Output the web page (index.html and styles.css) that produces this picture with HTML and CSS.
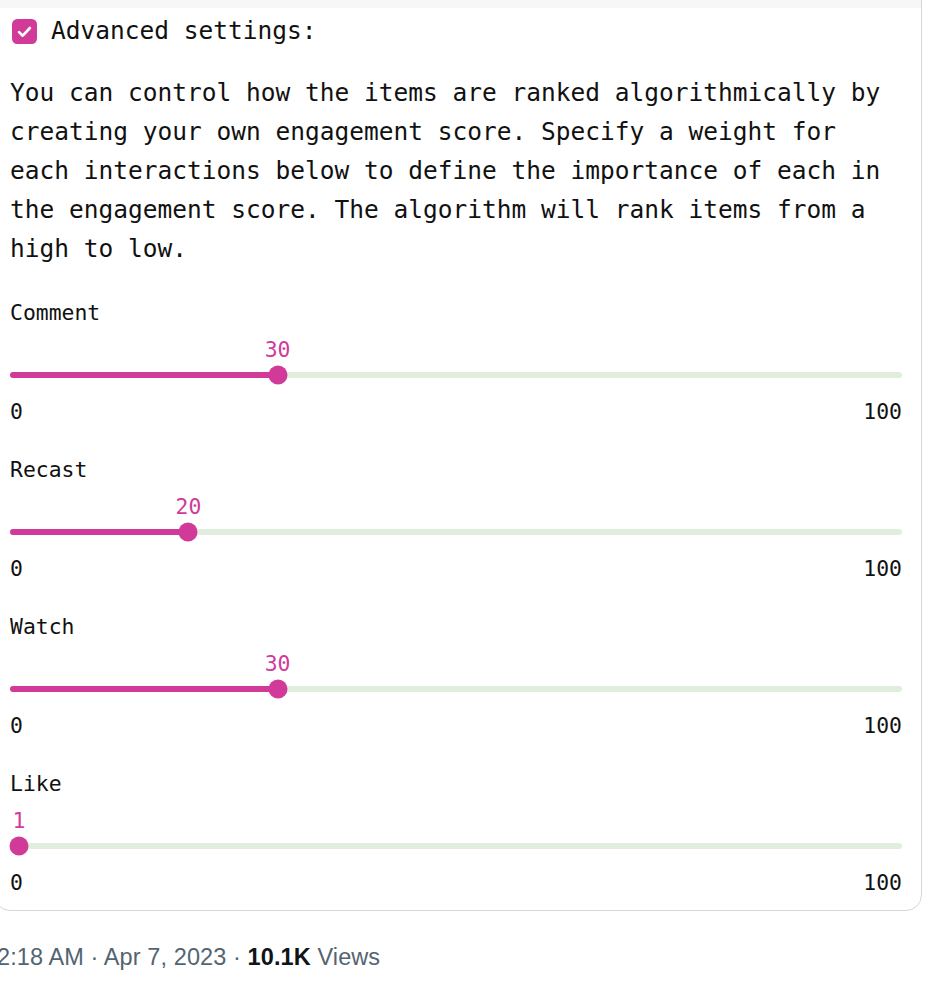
FILE: index.html
```html
<!DOCTYPE html>
<html lang="en">
<head>
<meta charset="utf-8">
<title>Advanced settings</title>
<link rel="stylesheet" href="styles.css">
</head>
<body>
<div class="card">
  <div class="media-strip"></div>
  <div class="card-body">
    <label class="title">
      <svg class="checkbox" width="25" height="25" viewBox="0 0 24 24" aria-hidden="true">
        <rect x="0" y="0" width="24" height="24" rx="5" fill="#d23a9a"/>
        <path d="M6.8 12.6 L10.3 16 L17.2 8.6" fill="none" stroke="#fff" stroke-width="2.6" stroke-linecap="round" stroke-linejoin="round"/>
      </svg>
      <span>Advanced settings:</span>
    </label>
    <p class="intro">You can control how the items are ranked algorithmically by creating your own engagement score. Specify a weight for each interactions below to define the importance of each in the engagement score. The algorithm will rank items from a high to low.</p>

    <div class="slider">
      <div class="slider-label">Comment</div>
      <div class="slider-value-row"><span class="slider-value" style="left:30%">30</span></div>
      <div class="track">
        <div class="track-fill" style="width:30%"></div>
        <div class="thumb" style="left:30%"></div>
      </div>
      <div class="range"><span>0</span><span>100</span></div>
    </div>

    <div class="slider">
      <div class="slider-label">Recast</div>
      <div class="slider-value-row"><span class="slider-value" style="left:20%">20</span></div>
      <div class="track">
        <div class="track-fill" style="width:20%"></div>
        <div class="thumb" style="left:20%"></div>
      </div>
      <div class="range"><span>0</span><span>100</span></div>
    </div>

    <div class="slider">
      <div class="slider-label">Watch</div>
      <div class="slider-value-row"><span class="slider-value" style="left:30%">30</span></div>
      <div class="track">
        <div class="track-fill" style="width:30%"></div>
        <div class="thumb" style="left:30%"></div>
      </div>
      <div class="range"><span>0</span><span>100</span></div>
    </div>

    <div class="slider">
      <div class="slider-label">Like</div>
      <div class="slider-value-row"><span class="slider-value" style="left:1%">1</span></div>
      <div class="track">
        <div class="track-fill" style="width:1%"></div>
        <div class="thumb" style="left:1%"></div>
      </div>
      <div class="range"><span>0</span><span>100</span></div>
    </div>
  </div>
</div>
<div class="meta">
  <span>2:18 AM · Apr 7, 2023 · </span><strong>10.1K</strong><span> Views</span>
</div>
</body>
</html>
```

FILE: styles.css
```css
html, body {
  margin: 0;
  padding: 0;
  background: #ffffff;
}

body {
  width: 936px;
  height: 994px;
  overflow: hidden;
}

.card {
  box-sizing: border-box;
  width: 928px;
  margin-left: -6px;
  margin-top: -30px;
  border: 1px solid #cfd9de;
  border-radius: 16px;
  background: #ffffff;
  overflow: hidden;
}

.media-strip {
  height: 37px;
  background: #f7f7f7;
}

.card-body {
  padding: 7px 19px 14px 15px;
  font-family: "DejaVu Sans Mono", "Liberation Mono", monospace;
  color: #111111;
}

.title {
  display: flex;
  align-items: center;
  gap: 14px;
  height: 30px;
  font-size: 24.5px;
  padding-left: 2px;
}

.checkbox {
  display: block;
  flex: none;
  margin-top: 2px;
}

.intro {
  margin: 28px 0 0;
  font-size: 24.5px;
  line-height: 39px;
}

.slider {
  margin-top: 32px;
  font-size: 21.4px;
}

.slider + .slider {
  margin-top: 32px;
}

.slider-label {
  line-height: 26px;
}

.slider-value-row {
  position: relative;
  height: 26px;
  margin-top: 11px;
  line-height: 26px;
}

.slider-value {
  position: absolute;
  top: 0;
  transform: translateX(-50%);
  color: #d23a9a;
}

.track {
  position: relative;
  height: 6px;
  margin: 9px 0 7px;
  border-radius: 3px;
  background: #e2eedd;
}

.track-fill {
  height: 100%;
  border-radius: 3px;
  background: #d23a9a;
}

.thumb {
  position: absolute;
  top: 50%;
  width: 19px;
  height: 19px;
  border-radius: 50%;
  background: #d23a9a;
  transform: translate(-50%, -50%);
}

.range {
  display: flex;
  justify-content: space-between;
  margin-top: 21px;
  line-height: 26px;
}

.meta {
  margin-top: 31px;
  margin-left: -3px;
  font-family: "Liberation Sans", Arial, sans-serif;
  font-size: 23.5px;
  line-height: 30px;
  letter-spacing: 0.1px;
  color: #536471;
}

.meta strong {
  color: #0f1419;
  font-weight: 700;
}
```
